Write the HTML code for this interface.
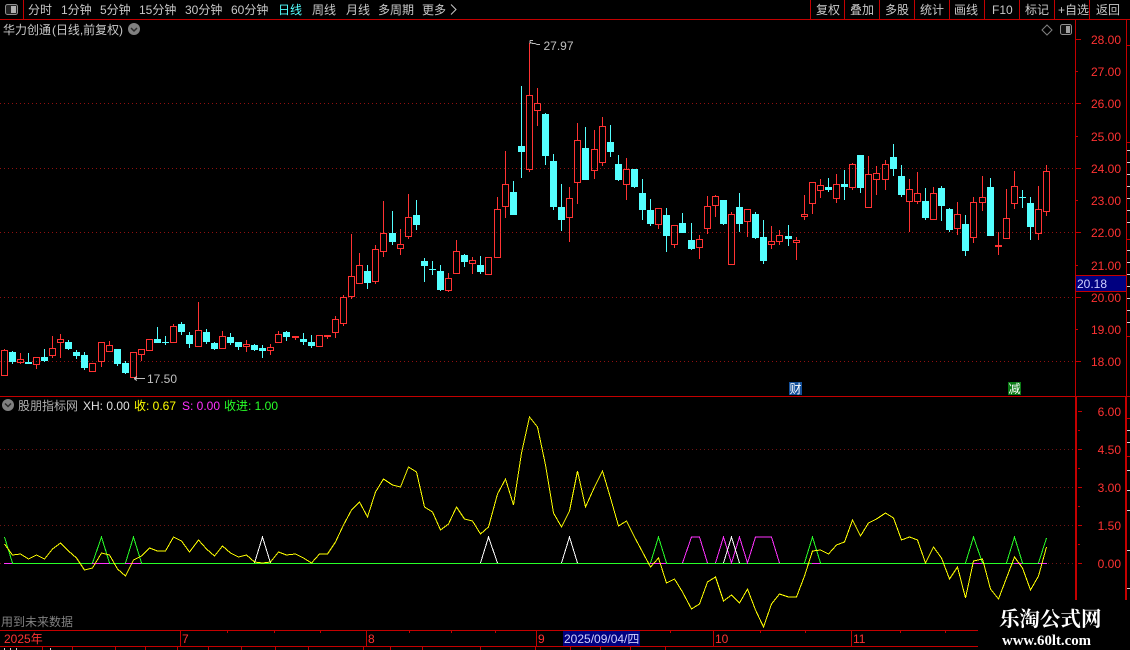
<!DOCTYPE html>
<html lang="zh"><head><meta charset="utf-8"><title>华力创通</title>
<style>
html,body{margin:0;padding:0;background:#000;width:1130px;height:650px;overflow:hidden}
svg{display:block}
text{font-family:"Liberation Sans","WenQuanYi Zen Hei","Noto Sans CJK SC",sans-serif;font-size:12px}
.m{fill:#c8c8c8}
.a{fill:#ff3232;text-anchor:end}
.t{fill:#ff3232}
</style></head><body>
<svg width="1130" height="650" viewBox="0 0 1130 650" xmlns="http://www.w3.org/2000/svg">
<rect width="1130" height="650" fill="#000"/>
<!-- grid -->
<g stroke-dasharray="1 3" stroke-width="1" shape-rendering="crispEdges">
<path stroke="#901010" d="M0 103.5H1075M0 168.5H1075M0 232.5H1075M0 297.5H1075M0 361.5H1075"/>
<path stroke="#701414" d="M0 449.5H1075M0 487.5H1075M0 525.5H1075M0 563.5H1075"/>
</g>
<!-- red candles -->
<path fill="none" stroke="#ff3232" shape-rendering="crispEdges" d="M1.5 350.5h6v25h-6zM4.5 349V350M17.5 359.5h6v3h-6zM20.5 353V359M20.5 363V364M33.5 357.5h6v7h-6zM36.5 365V369M49.5 348.5h6v7h-6zM52.5 336V348M52.5 356V358M57.5 339.5h6v3h-6zM60.5 334V339M60.5 343V358M89.5 363.5h6v8h-6zM98.5 342.5h6v19h-6zM101.5 362V367M106.5 345.5h6v6h-6zM109.5 341V345M130.5 352.5h6v25h-6zM138.5 349.5h6v5h-6zM141.5 355V361M146.5 339.5h6v11h-6zM170.5 326.5h6v16h-6zM173.5 324V326M195.5 330.5h6v16h-6zM198.5 302V330M219.5 336.5h6v12h-6zM222.5 331V336M243.5 344.5h6v2h-6zM246.5 340V344M246.5 347V352M267.5 347.5h6v3h-6zM270.5 344V347M270.5 351V355M275.5 334.5h6v8h-6zM278.5 331V334M292.5 336.5h6v1h-6zM295.5 338V340M316.5 335.5h6v11h-6zM324.5 335.5h6v1h-6zM327.5 337V339M332.5 319.5h6v13h-6zM335.5 316V319M335.5 333V338M340.5 297.5h6v26h-6zM343.5 295V297M343.5 324V326M348.5 276.5h6v20h-6zM351.5 234V276M351.5 297V299M356.5 265.5h6v18h-6zM359.5 253V265M372.5 249.5h6v32h-6zM375.5 245V249M375.5 282V284M380.5 233.5h6v18h-6zM383.5 201V233M383.5 252V257M397.5 244.5h6v4h-6zM400.5 229V244M400.5 249V255M405.5 217.5h6v19h-6zM408.5 194V217M408.5 237V239M445.5 278.5h6v12h-6zM448.5 273V278M448.5 291V292M453.5 251.5h6v22h-6zM456.5 240V251M469.5 260.5h6v3h-6zM472.5 257V260M472.5 264V274M485.5 257.5h6v17h-6zM494.5 209.5h6v48h-6zM497.5 197V209M502.5 184.5h6v22h-6zM505.5 151V184M505.5 207V218M526.5 95.5h6v74h-6zM529.5 43V95M529.5 170V172M534.5 103.5h6v7h-6zM537.5 88V103M537.5 111V126M566.5 198.5h6v19h-6zM569.5 187V198M569.5 218V242M574.5 140.5h6v42h-6zM577.5 123V140M577.5 183V204M591.5 149.5h6v21h-6zM594.5 130V149M594.5 171V179M599.5 126.5h6v36h-6zM602.5 117V126M602.5 163V166M623.5 169.5h6v15h-6zM626.5 158V169M626.5 185V200M655.5 208.5h6v16h-6zM658.5 225V229M671.5 225.5h6v19h-6zM674.5 245V248M696.5 239.5h6v8h-6zM699.5 235V239M699.5 248V259M704.5 206.5h6v22h-6zM707.5 196V206M707.5 229V234M712.5 196.5h6v9h-6zM715.5 195V196M715.5 206V217M728.5 214.5h6v50h-6zM731.5 212V214M744.5 209.5h6v12h-6zM747.5 222V237M768.5 241.5h6v3h-6zM771.5 226V241M771.5 245V249M776.5 235.5h6v6h-6zM779.5 230V235M779.5 242V245M793.5 240.5h6v2h-6zM796.5 237V240M796.5 243V260M801.5 214.5h6v2h-6zM804.5 195V214M804.5 217V220M809.5 182.5h6v21h-6zM812.5 204V214M817.5 185.5h6v5h-6zM820.5 179V185M820.5 191V198M833.5 184.5h6v14h-6zM836.5 174V184M836.5 199V203M849.5 164.5h6v23h-6zM852.5 163V164M852.5 188V190M865.5 174.5h6v33h-6zM868.5 156V174M873.5 173.5h6v6h-6zM876.5 166V173M876.5 180V195M882.5 164.5h6v15h-6zM885.5 160V164M885.5 180V190M906.5 189.5h6v12h-6zM909.5 179V189M909.5 202V232M914.5 193.5h6v8h-6zM917.5 172V193M917.5 202V204M930.5 193.5h6v26h-6zM933.5 187V193M954.5 214.5h6v14h-6zM957.5 202V214M957.5 229V235M970.5 202.5h6v35h-6zM973.5 197V202M973.5 238V243M979.5 197.5h6v5h-6zM982.5 176V197M982.5 203V211M995.5 245.5h6v1h-6zM998.5 232V245M998.5 247V255M1003.5 218.5h6v20h-6zM1006.5 189V218M1011.5 186.5h6v17h-6zM1014.5 171V186M1014.5 204V209M1035.5 209.5h6v24h-6zM1038.5 186V209M1038.5 234V240M1043.5 171.5h6v40h-6zM1046.5 165V171M1046.5 212V216"/>
<!-- cyan wicks -->
<path fill="none" stroke="#54ffff" shape-rendering="crispEdges" d="M12.5 351V364M28.5 353V364M44.5 349V362M68.5 340V350M76.5 350V359M84.5 352V370M117.5 349V366M125.5 361V374M157.5 327V343M165.5 336V345M181.5 322V335M189.5 332V348M206.5 329V344M214.5 342V350M230.5 333V345M238.5 342V350M254.5 344V351M262.5 345V358M286.5 331V341M303.5 333V345M311.5 335V348M367.5 265V289M392.5 211V245M416.5 200V230M424.5 258V282M432.5 261V275M440.5 265V291M464.5 254V267M480.5 256V274M513.5 181V215M521.5 86V178M545.5 113V165M553.5 154V210M561.5 184V231M585.5 127V180M610.5 125V157M618.5 155V181M634.5 169V188M642.5 179V220M650.5 199V226M666.5 208V252M682.5 213V233M691.5 223V250M723.5 200V225M739.5 193V232M755.5 212V239M763.5 220V264M788.5 225V246M828.5 178V192M844.5 170V200M860.5 155V193M893.5 144V176M901.5 165V197M925.5 188V220M941.5 186V221M949.5 208V232M965.5 215V256M990.5 178V236M1022.5 190V208M1030.5 197V240"/>
<!-- cyan bodies -->
<path fill="#54ffff" shape-rendering="crispEdges" d="M9 352h7v10h-7zM25 362h7v2h-7zM41 357h7v4h-7zM65 342h7v7h-7zM73 352h7v4h-7zM81 355h7v13h-7zM114 349h7v15h-7zM122 363h7v10h-7zM154 339h7v4h-7zM162 342h7v1h-7zM178 324h7v8h-7zM186 335h7v9h-7zM203 332h7v10h-7zM211 343h7v6h-7zM227 337h7v6h-7zM235 342h7v5h-7zM251 345h7v5h-7zM259 348h7v3h-7zM283 332h7v5h-7zM300 339h7v3h-7zM308 342h7v4h-7zM364 271h7v12h-7zM389 233h7v9h-7zM413 215h7v10h-7zM421 261h7v5h-7zM429 269h7v1h-7zM437 271h7v19h-7zM461 255h7v7h-7zM477 265h7v7h-7zM510 192h7v23h-7zM518 146h7v6h-7zM542 114h7v42h-7zM550 161h7v46h-7zM558 207h7v13h-7zM582 148h7v32h-7zM607 142h7v10h-7zM615 164h7v16h-7zM631 169h7v18h-7zM639 193h7v17h-7zM647 210h7v14h-7zM663 215h7v21h-7zM679 223h7v10h-7zM688 240h7v9h-7zM720 200h7v24h-7zM736 207h7v17h-7zM752 214h7v24h-7zM760 237h7v24h-7zM785 236h7v3h-7zM825 187h7v3h-7zM841 184h7v3h-7zM857 155h7v33h-7zM890 157h7v12h-7zM898 176h7v19h-7zM922 201h7v17h-7zM938 188h7v18h-7zM946 209h7v21h-7zM962 224h7v27h-7zM987 187h7v49h-7zM1019 197h7v1h-7zM1027 203h7v24h-7z"/>
<!-- annotations -->
<g fill="none" stroke="#c0c0c0" shape-rendering="crispEdges">
<path d="M134 378.5H145M134 378.5l3-2M134 378.5l3 2"/>
<path d="M530 40.5h3M530 40.5v3M530 42.5l3 1M533 43.5h2l2 1h3"/>
</g>
<text x="147" y="383" fill="#c0c0c0">17.50</text>
<text x="543.500" y="50" fill="#c0c0c0">27.97</text>
<!-- event badges -->
<rect x="789" y="382" width="13" height="13" fill="#14509a"/>
<text x="789.500" y="393" fill="#fff">财</text>
<rect x="1008" y="382" width="13" height="13" fill="#0a7a14"/>
<text x="1008.500" y="393" fill="#fff">减</text>
<!-- frame lines -->
<path fill="none" stroke="#c40000" shape-rendering="crispEdges" d="M0 19.500H1130M23.500 0V19M810.500 0V19M844.500 0V19M879.500 0V19M914.500 0V19M949.500 0V19M984.500 0V19M1019.500 0V19M1054.500 0V19M1089.500 0V19M1075.500 19V396M1126.500 19V396M0 396.500H1130M1076 39.500h5M1076 71.500h2M1076 103.500h5M1076 136.500h2M1076 168.500h5M1076 200.500h2M1076 232.500h5M1076 265.500h2M1076 297.500h5M1076 329.500h2M1076 361.500h5M1078 411.500h4M1078 430.500h2M1078 449.500h4M1078 468.500h2M1078 487.500h4M1078 506.500h2M1078 525.500h4M1078 544.500h2M1078 563.500h4M1127 45.500h3M1127 142.500h3M1127 239.500h3M1127 336.500h3M1127 418.500h3M1127 456.500h3M0 630.500H978M0 646.500H978M180.500 630V646M366.500 630V646M536.500 630V646M713.500 630V646M851.500 630V646M227.500 630v3M274.500 630v3M320.500 630v3M409.500 630v3M451.500 630v3M495.500 630v3M670.500 630v3M760.500 630v3M805.500 630v3M900.500 630v3M945.500 630v3M42.500 646v4M72.500 646v4M115.500 646v4M145.500 646v4M177.500 646v4M208.500 646v4M241.500 646v4M275.500 646v4M308.500 646v4M363.500 646v4M390.500 646v4M422.500 646v4M480.500 646v4M535.500 646v4M570.500 646v4M600.500 646v4M630.500 646v4M665.500 646v4"/>
<path fill="none" stroke="#c40000" stroke-width="2" shape-rendering="crispEdges" d="M1076 397V600M1126 397V600"/>
<path fill="none" stroke="#d0d0d0" shape-rendering="crispEdges" d="M1127 150.500h3M1127 162.500h3M1127 174.500h3M1127 186.500h3M1127 198.500h3M1127 210.500h3M1127 222.500h3M1127 250.500h3M1127 262.500h3M1127 274.500h3M1127 286.500h3M1127 298.500h3M1127 310.500h3M1127 322.500h3M1127 430.500h3M1127 442.500h3M1127 470.500h3M1127 490.500h3M1127 510.500h3M1127 550.500h3M1127 588.500h3M4.500 648v2M10.500 648v2M16.500 648v2M50.500 648v2"/>
<!-- price labels -->
<text class="a" x="1121" y="44">28.00</text>
<text class="a" x="1121" y="76">27.00</text>
<text class="a" x="1121" y="108">26.00</text>
<text class="a" x="1121" y="141">25.00</text>
<text class="a" x="1121" y="173">24.00</text>
<text class="a" x="1121" y="205">23.00</text>
<text class="a" x="1121" y="237">22.00</text>
<text class="a" x="1121" y="270">21.00</text>
<text class="a" x="1121" y="302">20.00</text>
<text class="a" x="1121" y="334">19.00</text>
<text class="a" x="1121" y="366">18.00</text>
<rect x="1075.500" y="275.500" width="51" height="16" fill="#000080" stroke="#c40000" shape-rendering="crispEdges"/>
<text x="1077" y="288" fill="#d0d0ff">20.18</text>
<text class="a" x="1121" y="416">6.00</text>
<text class="a" x="1121" y="454">4.50</text>
<text class="a" x="1121" y="492">3.00</text>
<text class="a" x="1121" y="530">1.50</text>
<text class="a" x="1121" y="568">0.00</text>
<!-- indicator -->
<g fill="none" shape-rendering="crispEdges">
<path stroke="#ff32ff" d="M4 563.500H12M92 563.500H109M125 563.500H141M650 563.500H666M812 563.500H820M973 563.500H982M1014 563.500H1022M1038 563.500H1047"/>
<path stroke="#28ff28" d="M12 563.500H92M109 563.500H125M141 563.500H650M666 563.500H812M820 563.500H973M982 563.500H1014M1022 563.500H1038"/>
<path stroke="#ff32ff" d="M682.500 563L691.500 537H699.500L707.500 563M715.500 563L723.500 537L731.500 563L739.500 537L747.500 563L755.500 537H771.500L779.500 563"/>
<path stroke="#fff" d="M254.500 563L262.500 537L270.500 563M480.500 563L488.500 537L497.500 563M561.500 563L569.500 537L577.500 563M723.500 563L731.500 537L739.500 563"/>
<path stroke="#28ff28" d="M4.500 537L12.500 563M92.500 563L101.500 537L109.500 563M125.500 563L133.500 537L141.500 563M650.500 563L658.500 537L666.500 563M804.500 563L812.500 537L820.500 563M965.500 563L973.500 537L982.500 563M1006.500 563L1014.500 537L1022.500 563M1038.500 563L1046.500 538"/>
<polyline stroke="#ffff00" points="4.500,544 12.500,555 20.500,554 28.500,559 36.500,555 44.500,559 52.500,549 60.500,543 68.500,551 76.500,558 84.500,570 92.500,568 101.500,553 109.500,555 117.500,569 125.500,576 133.500,560 141.500,556 149.500,548 157.500,551 165.500,551 173.500,537 181.500,541 189.500,552 198.500,540 206.500,549 214.500,556 222.500,546 230.500,553 238.500,557 246.500,555 254.500,562 262.500,563 270.500,562 278.500,552 286.500,555 295.500,554 303.500,558 311.500,563 319.500,554 327.500,554 335.500,542 343.500,525 351.500,510 359.500,502 367.500,517 375.500,492 383.500,479 392.500,485 400.500,487 408.500,467 416.500,472 424.500,507 432.500,512 440.500,530 448.500,524 456.500,507 464.500,519 472.500,521 480.500,534 488.500,527 497.500,494 505.500,479 513.500,505 521.500,453 529.500,417 537.500,427 545.500,465 553.500,513 561.500,527 569.500,511 577.500,471 585.500,507 594.500,487 602.500,471 610.500,498 618.500,526 626.500,521 634.500,537 642.500,552 650.500,567 658.500,558 666.500,583 674.500,579 682.500,592 691.500,609 699.500,604 707.500,582 715.500,577 723.500,601 731.500,595 739.500,603 747.500,589 755.500,610 763.500,627 771.500,604 779.500,594 788.500,597 796.500,597 804.500,576 812.500,551 820.500,550 828.500,554 836.500,545 844.500,542 852.500,520 860.500,536 868.500,523 876.500,519 885.500,513 893.500,518 901.500,540 909.500,537 917.500,540 925.500,563 933.500,547 941.500,558 949.500,579 957.500,567 965.500,598 973.500,561 982.500,559 990.500,589 998.500,599 1006.500,578 1014.500,557 1022.500,568 1030.500,590 1038.500,576 1046.500,547"/>
</g>
<!-- header menu -->
<rect x="5.500" y="4.500" width="12" height="10" rx="2" fill="#222" stroke="#909090"/>
<rect x="11" y="6" width="5" height="7" fill="#b0b0b0"/>
<text class="m" x="28" y="14">分时</text>
<text class="m" x="61" y="14">1分钟</text>
<text class="m" x="100" y="14">5分钟</text>
<text class="m" x="139" y="14">15分钟</text>
<text class="m" x="185" y="14">30分钟</text>
<text class="m" x="231" y="14">60分钟</text>
<text x="278" y="14" fill="#54ffff">日线</text>
<text class="m" x="312" y="14">周线</text>
<text class="m" x="346" y="14">月线</text>
<text class="m" x="378" y="14">多周期</text>
<text class="m" x="422" y="14">更多</text>
<path d="M451 4.500l5 5-5 5" fill="none" stroke="#c8c8c8"/>
<text class="m" x="816" y="14">复权</text>
<text class="m" x="850" y="14">叠加</text>
<text class="m" x="885" y="14">多股</text>
<text class="m" x="920" y="14">统计</text>
<text class="m" x="954" y="14">画线</text>
<text class="m" x="992" y="14">F10</text>
<text class="m" x="1025" y="14">标记</text>
<text class="m" x="1058" y="14">+自选</text>
<text class="m" x="1096" y="14">返回</text>
<!-- title -->
<text class="m" x="3" y="34">华力创通</text>
<text class="m" x="52" y="34" textLength="71" lengthAdjust="spacingAndGlyphs">(日线,前复权)</text>
<circle cx="134" cy="29" r="6" fill="#808080"/>
<path d="M131 28l3 3 3-3" fill="none" stroke="#2a2a2a" stroke-width="1.500"/>
<path d="M1047 25l5 5-5 5-5-5z" fill="none" stroke="#808080"/>
<rect x="1060.500" y="24.500" width="11" height="10" rx="2" fill="#111" stroke="#909090"/>
<rect x="1066" y="26" width="4" height="7" fill="#a0a0a0"/>
<!-- legend -->
<circle cx="8" cy="405" r="6" fill="#808080"/>
<path d="M5 403.500l3 3 3-3" fill="none" stroke="#2a2a2a" stroke-width="1.500"/>
<text x="18" y="410" fill="#b0b0b0">股朋指标网</text>
<text x="83" y="410" fill="#e0e0e0">XH: 0.00</text>
<text x="134" y="410" fill="#ffff00">收: 0.67</text>
<text x="182" y="410" fill="#ff32ff">S: 0.00</text>
<text x="224" y="410" fill="#28ff28">收进: 1.00</text>
<text x="1" y="626" fill="#808080">用到未来数据</text>
<!-- time axis -->
<rect x="563" y="631" width="77" height="15" fill="#000080"/>
<text class="t" x="4" y="643">2025年</text>
<text class="t" x="182" y="643">7</text>
<text class="t" x="368" y="643">8</text>
<text class="t" x="538" y="643">9</text>
<text class="t" x="715" y="643">10</text>
<text class="t" x="853" y="643">11</text>
<text x="564" y="643" fill="#d0d0ff">2025/09/04/四</text>
<!-- watermark -->
<rect x="978" y="600" width="152" height="50" fill="#000"/>
<text x="999" y="626" fill="#fff" font-weight="bold" style="font-family:'Noto Serif CJK SC','Liberation Serif',serif;font-size:20.500px;font-weight:700">乐淘公式网</text>
<text x="1002" y="645" fill="#fff" textLength="89" lengthAdjust="spacingAndGlyphs" style="font-family:'Liberation Serif',serif;font-size:14.500px;font-weight:700">www.60lt.com</text>
</svg>
</body></html>
